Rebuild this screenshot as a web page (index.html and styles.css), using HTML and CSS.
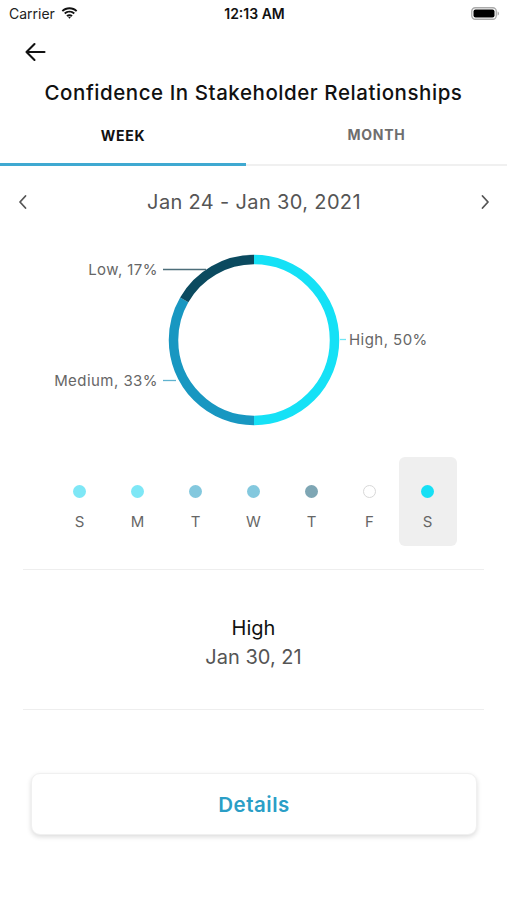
FILE: index.html
```html
<!DOCTYPE html>
<html>
<head>
<meta charset="utf-8">
<link rel="stylesheet" href="styles.css">
</head>
<body>
<div class="screen">
  <div class="status">
    <div class="status-left">
      <span class="carrier">Carrier</span>
      <svg class="wifi" width="17" height="12" viewBox="0 0 17 12">
        <path d="M8.5 2.2c2.5 0 4.8 1 6.5 2.6l1.3-1.4C14.3 1.4 11.5.2 8.5.2S2.7 1.4.7 3.4L2 4.8c1.7-1.6 4-2.6 6.5-2.6z" fill="#111"/>
        <path d="M8.5 5.6c1.6 0 3 .6 4.1 1.6l1.3-1.4C12.5 4.5 10.6 3.7 8.5 3.7S4.5 4.5 3.1 5.8l1.3 1.4c1.1-1 2.5-1.6 4.1-1.6z" fill="#111"/>
        <path d="M8.5 9.2c.7 0 1.3.2 1.8.6l1.4-1.4C10.8 7.6 9.7 7.2 8.5 7.2s-2.3.4-3.2 1.2l1.4 1.4c.5-.4 1.1-.6 1.8-.6zM8.5 11.8l1.2-1.3c-.3-.3-.7-.4-1.2-.4s-.9.1-1.2.4z" fill="#111"/>
      </svg>
    </div>
    <div class="time">12:13 AM</div>
    <div class="status-right">
      <svg width="29" height="13" viewBox="0 0 29 13">
        <rect x="0.75" y="0.75" width="24.5" height="11.5" rx="3.5" fill="none" stroke="#aaa" stroke-width="1.3"/>
        <rect x="2.5" y="2.5" width="21" height="8" rx="2" fill="#000"/>
        <path d="M26.6 4.4v4.2c.9-.3 1.4-1.1 1.4-2.1s-.5-1.8-1.4-2.1z" fill="#aaa"/>
      </svg>
    </div>
  </div>

  <div class="navbar">
    <svg class="back" width="22" height="20" viewBox="0 0 22 20">
      <path d="M20.5 10H2.5M10.5 2L2.5 10l8 8" fill="none" stroke="#111" stroke-width="2.1" stroke-linecap="round" stroke-linejoin="round"/>
    </svg>
  </div>

  <h1 class="title">Confidence In Stakeholder Relationships</h1>

  <div class="tabs">
    <div class="tab active">WEEK</div>
    <div class="tab">MONTH</div>
  </div>

  <div class="range">
    <svg width="10" height="16" viewBox="0 0 10 16"><path d="M7.5 2L2 8l5.5 6" fill="none" stroke="#555" stroke-width="1.8" stroke-linecap="round" stroke-linejoin="round"/></svg>
    <span class="range-text">Jan 24 - Jan 30, 2021</span>
    <svg width="10" height="16" viewBox="0 0 10 16"><path d="M2.5 2L8 8l-5.5 6" fill="none" stroke="#555" stroke-width="1.8" stroke-linecap="round" stroke-linejoin="round"/></svg>
  </div>

  <svg class="chart" width="507" height="200" viewBox="0 0 507 200">
    <g transform="rotate(-90 254 100)">
      <circle cx="254" cy="100" r="80.5" fill="none" stroke="#15e1f6" stroke-width="9.5" pathLength="100" stroke-dasharray="50 50" stroke-dashoffset="0"/>
      <circle cx="254" cy="100" r="80.5" fill="none" stroke="#1897c1" stroke-width="9.5" pathLength="100" stroke-dasharray="33.33 66.67" stroke-dashoffset="-50"/>
      <circle cx="254" cy="100" r="80.5" fill="none" stroke="#0b4a5f" stroke-width="9.5" pathLength="100" stroke-dasharray="16.67 83.33" stroke-dashoffset="-83.33"/>
    </g>
    <line x1="163" y1="29.5" x2="206" y2="29.5" stroke="#4d6e7a" stroke-width="1.3"/>
    <line x1="340" y1="99.5" x2="346" y2="99.5" stroke="#6fe6f5" stroke-width="1.3"/>
    <line x1="163" y1="140.5" x2="176" y2="140.5" stroke="#5fb2cf" stroke-width="1.3"/>
    <text class="lbl" x="158" y="35" text-anchor="end">Low, 17%</text>
    <text class="lbl" x="349" y="105">High, 50%</text>
    <text class="lbl" x="158" y="146" text-anchor="end">Medium, 33%</text>
  </svg>

  <div class="days">
    <div class="day"><span class="dot d-high-l"></span><span class="letter">S</span></div>
    <div class="day"><span class="dot d-high-l"></span><span class="letter">M</span></div>
    <div class="day"><span class="dot d-med"></span><span class="letter">T</span></div>
    <div class="day"><span class="dot d-med"></span><span class="letter">W</span></div>
    <div class="day"><span class="dot d-low"></span><span class="letter">T</span></div>
    <div class="day"><span class="dot d-none"></span><span class="letter">F</span></div>
    <div class="day selected"><span class="dot d-high"></span><span class="letter">S</span></div>
  </div>

  <div class="summary">
    <div class="sum-level">High</div>
    <div class="sum-date">Jan 30, 21</div>
  </div>

  <div class="action">
    <button class="details">Details</button>
  </div>
</div>
</body>
</html>
```

FILE: styles.css
```css
* { box-sizing: border-box; }
html, body { margin: 0; padding: 0; background: #fff; }
body { font-family: Inter, Roboto, "Liberation Sans", sans-serif; color: #111; }
.screen { width: 507px; min-height: 900px; display: flex; flex-direction: column; }

.status { height: 27px; display: flex; align-items: center; justify-content: space-between; padding: 0 7px 0 9px; position: relative; }
.status-left { display: flex; align-items: center; gap: 6px; width: 120px; }
.carrier { font-size: 14px; color: #222; }
.wifi { margin-top: -2px; }
.time { font-size: 14px; font-weight: 600; color: #111; }
.status-right { width: 120px; display: flex; justify-content: flex-end; }

.navbar { height: 50px; display: flex; align-items: center; padding-left: 24px; }

.title { margin: 0; height: 32px; font-size: 20.5px; font-weight: 500; text-align: center; line-height: 32px; color: #111; letter-spacing: 0.55px; white-space: nowrap; }

.tabs { display: flex; height: 57px; border-bottom: 2px solid #f0f0f0; }
.tab { flex: 1; display: flex; align-items: center; justify-content: center; font-size: 14px; font-weight: 700; letter-spacing: 0.7px; color: #6e6e6e; padding-bottom: 4px; }
.tab.active { flex: 0 0 246px; color: #111; border-bottom: 3px solid #3fa9d1; margin-bottom: -2px; padding-bottom: 1px; }

.range { height: 72px; display: flex; align-items: center; justify-content: space-between; padding: 0 17px 0 18px; }
.range-text { font-size: 20px; color: #555; letter-spacing: 0.35px; }

.chart { display: block; margin-top: 2px; }
.lbl { font-family: Inter, Roboto, "Liberation Sans", sans-serif; font-size: 15px; letter-spacing: 0.45px; fill: #666; }

.days { display: flex; justify-content: center; margin-top: 17px; padding-bottom: 23px; border-bottom: 1.5px solid #eeeeee; margin-left: 23px; margin-right: 23px; }
.day { width: 58px; height: 89px; display: flex; flex-direction: column; align-items: center; padding-top: 28px; gap: 16px; border-radius: 6px; }
.day.selected { background: #efefef; }
.dot { width: 13px; height: 13px; border-radius: 50%; display: block; flex: none; }
.d-high-l { background: #7ee7f6; }
.d-high { background: #16e0f5; }
.d-med { background: #83c8de; }
.d-low { background: #7ea6b4; }
.d-none { background: #fff; border: 1px solid #d8d8d8; }
.letter { font-size: 15px; color: #666; line-height: 15px; }

.summary { margin: 0 23px; height: 140px; display: flex; flex-direction: column; align-items: center; justify-content: center; border-bottom: 1.5px solid #eeeeee; gap: 2px; padding-top: 6px; }
.sum-level { font-size: 20px; color: #111; line-height: 27px; }
.sum-date { font-size: 20px; color: #555; line-height: 27px; }

.action { padding: 63px 30px 0 31px; }
.details { width: 100%; height: 62px; background: #fff; border: 1px solid #f0f0f0; border-radius: 9px; box-shadow: 0 2px 5px rgba(0,0,0,0.14); font-family: Inter, Roboto, "Liberation Sans", sans-serif; font-size: 20.5px; font-weight: 600; color: #2a9ec6; letter-spacing: 0.5px; }
```
